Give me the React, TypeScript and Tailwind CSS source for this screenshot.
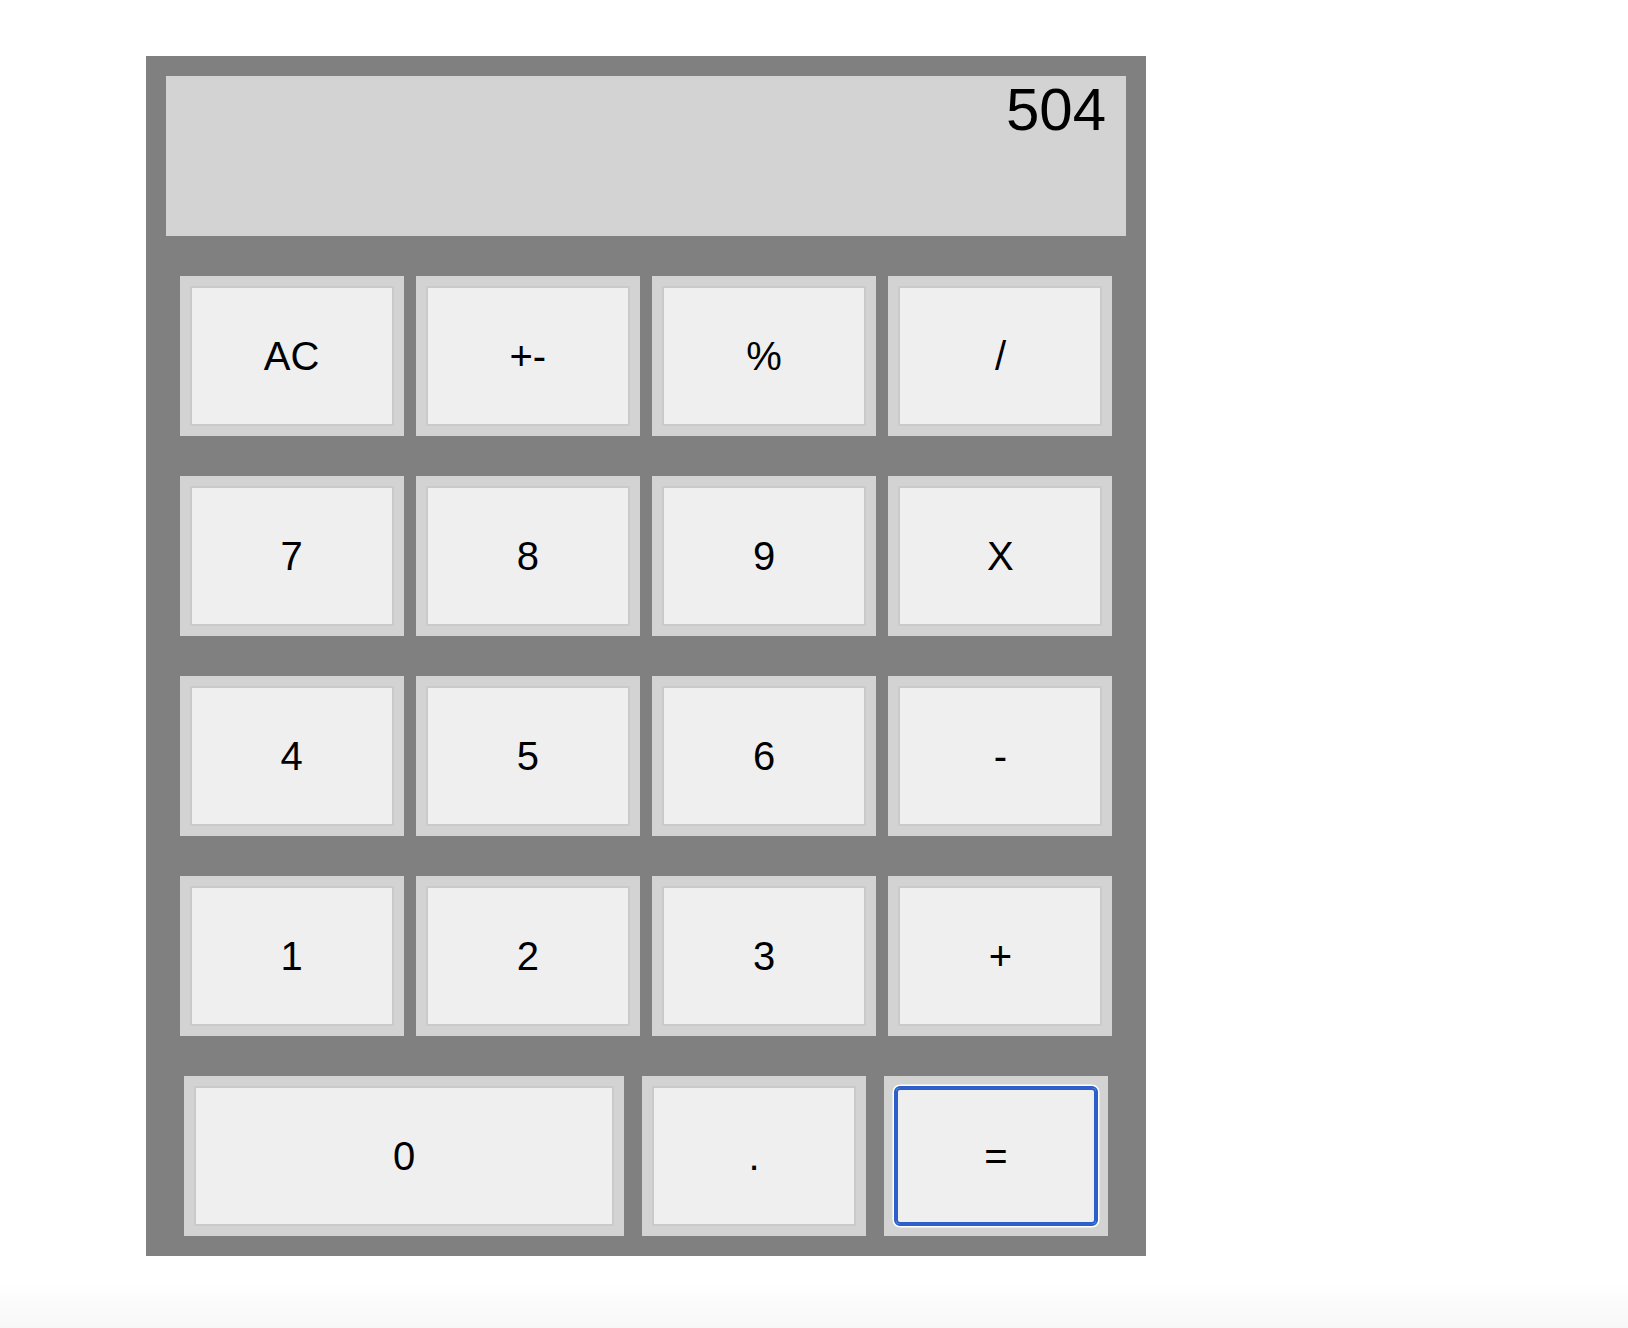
import { useState } from 'react';

type Key = { label: string; wide?: boolean };

const rows: Key[][] = [
  [{ label: 'AC' }, { label: '+-' }, { label: '%' }, { label: '/' }],
  [{ label: '7' }, { label: '8' }, { label: '9' }, { label: 'X' }],
  [{ label: '4' }, { label: '5' }, { label: '6' }, { label: '-' }],
  [{ label: '1' }, { label: '2' }, { label: '3' }, { label: '+' }],
];

const lastRow: Key[] = [{ label: '0', wide: true }, { label: '.' }, { label: '=' }];

function CalcKey({ k, focused, onPress }: { k: Key; focused: boolean; onPress: (v: string) => void }) {
  return (
    <div className={`${k.wide ? 'w-[440px]' : 'w-[224px]'} h-[160px] shrink-0 bg-[#d3d3d3] p-2.5`}>
      <button
        className={
          focused
            ? 'h-full w-full rounded-[6px] border-2 border-[#2c5fca] bg-[#efefef] text-[40px] leading-none text-black shadow-[0_0_0_1.5px_#fff,inset_0_0_0_2px_#2c5fca] outline-none'
            : 'h-full w-full border-2 border-[#cacaca] bg-[#efefef] text-[40px] leading-none text-black outline-none'
        }
        onClick={() => onPress(k.label)}
      >
        {k.label}
      </button>
    </div>
  );
}

export default function App() {
  const [display, setDisplay] = useState('504');
  const [focused, setFocused] = useState('=');

  const press = (v: string) => {
    setFocused(v);
    if (v === 'AC') setDisplay('0');
  };

  return (
    <div className="flex min-h-[1328px] w-full flex-col bg-white font-['Liberation_Sans',Arial,sans-serif]">
      <div className="pl-[146px] pt-[56px]">
        <div className="flex h-[1200px] w-[1000px] flex-col bg-[#808080] p-5">
          <div className="h-[160px] shrink-0 bg-[#d3d3d3] pr-5 text-right text-[60px] leading-[1.12] text-black">{display}</div>
          {rows.map((row, i) => (
            <div key={i} className="mt-10 flex justify-center gap-[12.3px]">
              {row.map((k) => (
                <CalcKey key={k.label} k={k} focused={focused === k.label} onPress={press} />
              ))}
            </div>
          ))}
          <div className="mt-10 flex justify-center gap-[18px]">
            {lastRow.map((k) => (
              <CalcKey key={k.label} k={k} focused={focused === k.label} onPress={press} />
            ))}
          </div>
        </div>
      </div>
      <div className="h-[27px]" />
      <div className="h-[45px] bg-gradient-to-b from-white to-[#f7f7f7]" />
    </div>
  );
}
